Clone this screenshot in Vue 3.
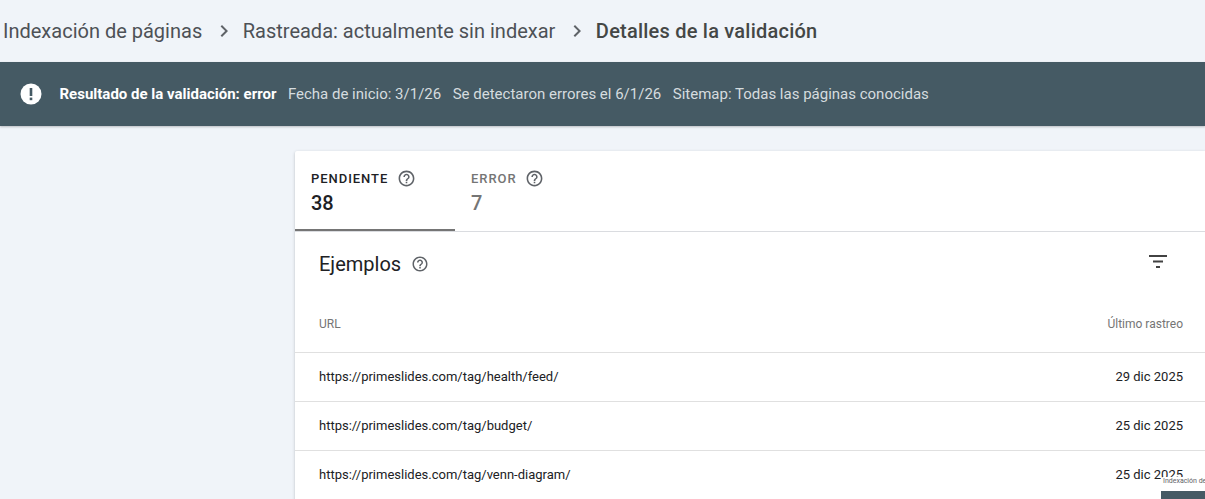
<script setup>
const rows = [
  { url: 'https://primeslides.com/tag/health/feed/', date: '29 dic 2025' },
  { url: 'https://primeslides.com/tag/budget/', date: '25 dic 2025' },
  { url: 'https://primeslides.com/tag/venn-diagram/', date: '25 dic 2025' },
]
const help = 'M11 18h2v-2h-2v2zm1-16C6.48 2 2 6.48 2 12s4.48 10 10 10 10-4.48 10-10S17.52 2 12 2zm0 18c-4.41 0-8-3.59-8-8s3.59-8 8-8 8 3.59 8 8-3.59 8-8 8zm0-14c-2.21 0-4 1.79-4 4h2c0-1.1.9-2 2-2s2 .9 2 2c0 2-3 1.75-3 5h2c0-2.25 3-2.5 3-5 0-2.21-1.79-4-4-4z'
</script>

<template>
  <div class="page">
    <nav class="crumbs">
      <span>Indexación de páginas</span>
      <svg class="chev" viewBox="0 0 24 24"><path d="M10 6 8.59 7.41 13.17 12l-4.58 4.59L10 18l6-6z" /></svg>
      <span>Rastreada: actualmente sin indexar</span>
      <svg class="chev" viewBox="0 0 24 24"><path d="M10 6 8.59 7.41 13.17 12l-4.58 4.59L10 18l6-6z" /></svg>
      <span class="current">Detalles de la validación</span>
    </nav>

    <div class="banner">
      <svg class="alert" viewBox="0 0 22 22">
        <circle cx="11" cy="11" r="10.5" fill="#fff" />
        <rect x="9.7" y="5" width="2.6" height="8" fill="#455a64" />
        <rect x="9.7" y="14.6" width="2.6" height="2.6" fill="#455a64" />
      </svg>
      <strong>Resultado de la validación: error</strong>
      <span>Fecha de inicio: 3/1/26</span>
      <span>Se detectaron errores el 6/1/26</span>
      <span>Sitemap: Todas las páginas conocidas</span>
    </div>

    <section class="card">
      <div class="tabs">
        <div class="tab active">
          <div class="tab-label">PENDIENTE <svg class="help" viewBox="0 0 24 24"><path :d="help" /></svg></div>
          <div class="tab-num">38</div>
        </div>
        <div class="tab">
          <div class="tab-label">ERROR <svg class="help" viewBox="0 0 24 24"><path :d="help" /></svg></div>
          <div class="tab-num">7</div>
        </div>
      </div>

      <div class="head">
        <h2>Ejemplos</h2>
        <svg class="help head-help" viewBox="0 0 24 24"><path :d="help" /></svg>
        <svg class="filter" viewBox="0 0 24 24"><path d="M3 6h18v2H3zm4 5.5h10v2H7zm3 5.5h4v2h-4z" /></svg>
      </div>

      <div class="row th"><span>URL</span><span>Último rastreo</span></div>
      <div v-for="r in rows" :key="r.url" class="row">
        <span>{{ r.url }}</span><span>{{ r.date }}</span>
      </div>
    </section>

    <div class="mini">
      <div class="mini-title">Indexación de</div>
      <div class="mini-bar"></div>
    </div>
  </div>
</template>

<style>
html, body { margin: 0; background: #f0f4f9; overflow: hidden; }
</style>

<style scoped>
.page {
  position: relative;
  width: 1205px;
  height: 499px;
  overflow: hidden;
  background: #f0f4f9;
  font-family: Roboto, "Liberation Sans", sans-serif;
}
.crumbs {
  height: 62px;
  display: flex;
  align-items: center;
  padding-left: 3px;
  font-size: 20px;
  color: #4d5156;
}
.chev { width: 24px; height: 24px; fill: #5f6368; margin: 0 7px 0 9.5px; }
.current { font-weight: 500; color: #444746; letter-spacing: .22px; }
.banner {
  height: 64px;
  background: #455a64;
  display: flex;
  align-items: center;
  gap: 11.5px;
  padding-left: 20px;
  font-size: 15px;
  color: #d5dcdf;
  box-shadow: 0 1px 2px rgba(60, 64, 67, .3);
}
.banner strong { color: #fff; font-weight: 700; }
.alert { width: 22px; height: 22px; margin-right: 6px; }
.card {
  position: absolute;
  left: 295px;
  top: 151px;
  width: 910px;
  height: 360px;
  background: #fff;
  border-radius: 2px 0 0 0;
  box-shadow: 0 1px 3px rgba(60, 64, 67, .3);
}
.tabs { display: flex; height: 80px; border-bottom: 1px solid #dadce0; }
.tab { width: 160px; height: 80px; box-sizing: border-box; padding: 19px 0 0 16px; color: #757575; }
.tab.active { color: #202124; border-bottom: 2px solid #757575; }
.tab-label {
  display: flex;
  align-items: center;
  gap: 8.5px;
  height: 16px;
  font-size: 13px;
  font-weight: 500;
  letter-spacing: .95px;
}
.tab-num { margin-top: 5px; font-size: 20px; font-weight: 500; line-height: 24px; }
.help { width: 19px; height: 19px; fill: #5f6368; flex: none; }
.head { height: 64px; display: flex; align-items: center; padding: 0 24px; }
.head h2 { margin: 0; font-size: 20px; font-weight: 400; color: #202124; }
.head-help { margin-left: 10px; width: 18px; height: 18px; }
.filter { width: 24px; height: 24px; margin-left: auto; margin-right: 11px; margin-top: -6px; fill: #424242; }
.row {
  height: 49px;
  box-sizing: border-box;
  display: flex;
  justify-content: space-between;
  align-items: center;
  padding: 0 22px 1px 24px;
  border-bottom: 1px solid #e0e0e0;
  font-size: 13px;
  color: #202124;
}
.row.th { height: 57px; padding-bottom: 0; font-size: 12px; color: #757575; }
.mini {
  position: absolute;
  left: 1161px;
  top: 477px;
  width: 44px;
  height: 22px;
  background: #fff;
  border-radius: 2px 0 0 0;
  overflow: hidden;
  font-size: 7px;
  color: #5f6368;
  white-space: nowrap;
}
.mini-title { height: 14px; padding: 0 0 0 2px; box-sizing: border-box; }
.mini-bar { height: 8px; background: #455a64; }
</style>
